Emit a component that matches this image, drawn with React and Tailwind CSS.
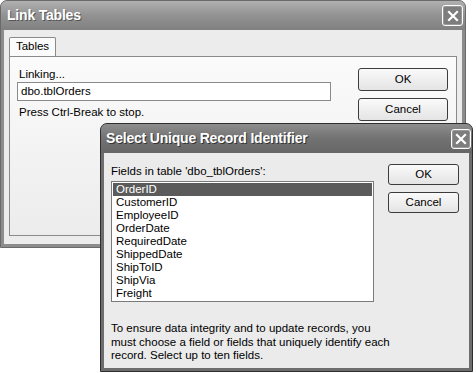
import React from 'react'

const font = { fontFamily: '"Liberation Sans", Arial, sans-serif' }

function CloseButton({ size }) {
  return (
    <div
      className={`${size} flex items-center justify-center rounded-[3px] border border-white bg-[#7d7d7d] shadow-[inset_0_0_0_1px_#999]`}
    >
      <svg width="12" height="12" viewBox="0 0 12 12">
        <path d="M2 2 L10 10 M10 2 L2 10" stroke="#fff" strokeWidth="2.2" strokeLinecap="square" />
      </svg>
    </div>
  )
}

function Button({ children, className }) {
  return (
    <div
      className={`flex items-center justify-center rounded-[3px] border border-[#3c3c3c] bg-gradient-to-b from-[#fafafa] to-[#e4e4e4] text-[11.5px] text-black ${className}`}
    >
      {children}
    </div>
  )
}

const fields = [
  'OrderID',
  'CustomerID',
  'EmployeeID',
  'OrderDate',
  'RequiredDate',
  'ShippedDate',
  'ShipToID',
  'ShipVia',
  'Freight',
]

export default function App() {
  return (
    <div className="relative w-[476px] h-[373px] overflow-hidden bg-white" style={font}>
      {/* Link Tables window */}
      <div className="absolute left-0 top-0 w-[466px] h-[248px] flex flex-col rounded-t-[7px] border border-[#6a6a6a] bg-[#8c8c8c]">
        <div className="h-[29px] flex items-center justify-between pl-[6px] pr-[2px] rounded-t-[6px] bg-gradient-to-b from-[#b0b0b0] via-[#929292] to-[#808080]">
          <span className="text-white font-bold text-[14px] tracking-[-0.2px] [text-shadow:1px_1px_0_#555]">Link Tables</span>
          <CloseButton size="w-[21px] h-[21px]" />
        </div>
        <div className="flex-1 mx-[3px] mb-[3px] bg-[#ececec] px-[5px] pt-[7px] flex flex-col">
          <div className="flex">
            <div className="w-[47px] h-[19px] bg-[#fbfbfb] border border-b-0 border-[#8a8a8a] rounded-t-[2px] text-[11.5px] flex items-center justify-center text-black">
              Tables
            </div>
          </div>
          <div className="h-[180px] border border-[#8a8a8a] bg-gradient-to-b from-[#fbfbfb] to-[#ececec] flex pl-[8px] pt-[10px]">
            <div className="w-[313px] flex flex-col text-[11.5px] text-black">
              <div className="leading-[14px] pl-[1px]">Linking...</div>
              <div className="mt-[1px] h-[19px] border border-[#8a8a8a] bg-white flex items-center pl-[3px] -ml-[1px]">
                dbo.tblOrders
              </div>
              <div className="mt-[4px] leading-[14px] pl-[1px]">Press Ctrl-Break to stop.</div>
            </div>
            <div className="ml-[27px] flex flex-col gap-[7px] pt-[1px]">
              <Button className="w-[90px] h-[23px]">OK</Button>
              <Button className="w-[90px] h-[23px]">Cancel</Button>
            </div>
          </div>
        </div>
      </div>

      {/* Select Unique Record Identifier window */}
      <div className="absolute left-[100px] top-[123px] w-[373px] h-[249px] flex flex-col rounded-t-[7px] border border-[#2e2e2e] bg-[#6e6e6e]">
        <div className="h-[29px] flex items-center justify-between pl-[5px] pr-[1px] rounded-t-[6px] bg-gradient-to-b from-[#8e8e8e] via-[#727272] to-[#666]">
          <span className="text-white font-bold text-[14px] tracking-[-0.2px] [text-shadow:1px_1px_0_#333]">Select Unique Record Identifier</span>
          <CloseButton size="w-[20px] h-[20px]" />
        </div>
        <div className="flex-1 mx-[3px] mb-[3px] bg-[#ebebeb] flex flex-col pl-[7px] pt-[11px] text-[11.5px] text-black">
          <div className="flex">
            <div className="flex flex-col">
              <div className="leading-[14px] h-[17px]">Fields in table 'dbo_tblOrders':</div>
              <div className="w-[263px] h-[121px] border border-[#7a7a7a] bg-white p-[1px]">
                {fields.map((f, i) => (
                  <div
                    key={f}
                    className={`h-[13px] leading-[13px] pl-[3px] ${i === 0 ? 'bg-[#5b5b5b] text-white' : ''}`}
                  >
                    {f}
                  </div>
                ))}
              </div>
            </div>
            <div className="ml-[14px] flex flex-col gap-[7px]">
              <Button className="w-[71px] h-[21px]">OK</Button>
              <Button className="w-[71px] h-[21px]">Cancel</Button>
            </div>
          </div>
          <div className="mt-[20px] leading-[13.5px] w-[282px]">
            To ensure data integrity and to update records, you must choose a field or fields that uniquely identify each record. Select up to ten fields.
          </div>
        </div>
      </div>
    </div>
  )
}
